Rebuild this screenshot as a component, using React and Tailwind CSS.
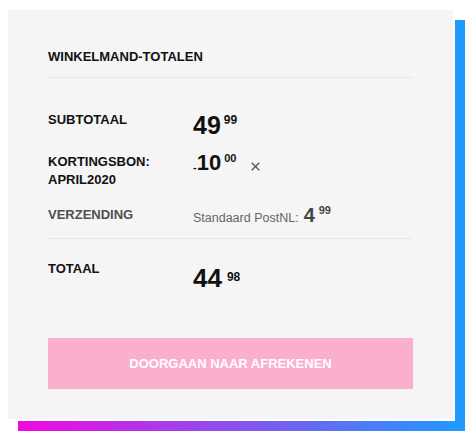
import React from "react";

function Close() {
  return (
    <svg width="9" height="9" viewBox="0 0 9 9" className="ml-[15px] mt-[10px] shrink-0">
      <path d="M0.7 0.7 L8.3 8.3 M8.3 0.7 L0.7 8.3" stroke="#555" strokeWidth="1.3" fill="none" />
    </svg>
  );
}

export default function App() {
  const font = { fontFamily: '"Liberation Sans", Arial, sans-serif' };
  return (
    <div className="bg-white w-[474px] h-[439px] pl-[8px] pt-[10px]" style={font}>
      <div className="relative w-[447px] h-[411px]">
        <div className="absolute left-[10px] top-[10px] w-[447px] h-[411px] bg-[linear-gradient(to_right,#f00ae0,#1e9bff)]" />
        <div className="relative w-[447px] h-[411px] bg-[#f5f5f5] border-r-2 border-b-2 border-white px-[40px] pt-[37px] text-[#111]">
          <div className="pb-[10px] border-b border-[#e7e7e7]">
            <div className="text-[13px] leading-[20px] font-bold">WINKELMAND-TOTALEN</div>
          </div>

          <div className="pb-[13px] border-b border-[#e7e7e7]">
            {/* Subtotaal */}
            <div className="flex items-start mt-[33px]">
              <div className="w-[145px] shrink-0 text-[13px] leading-[18px] font-bold">SUBTOTAAL</div>
              <div className="flex items-start mt-[2px]">
                <span className="text-[25px] leading-none font-bold">49</span>
                <span className="text-[12px] leading-none font-bold ml-[3px] mt-[1px]">99</span>
              </div>
            </div>

            {/* Kortingsbon */}
            <div className="flex items-start mt-[15px]">
              <div className="w-[145px] shrink-0 text-[13px] leading-[18px] font-bold">
                KORTINGSBON:
                <br />
                APRIL2020
              </div>
              <div className="flex items-start mt-[-1px]">
                <span className="text-[11px] leading-none font-bold mt-[10px]">-</span>
                <span className="text-[22px] leading-none font-bold">10</span>
                <span className="text-[11px] leading-none font-bold ml-[3px] mt-[1px]">00</span>
                <Close />
              </div>
            </div>

            {/* Verzending */}
            <div className="flex items-start mt-[17px]">
              <div className="w-[145px] shrink-0 text-[13px] leading-[18px] font-bold text-[#4f4f4f]">VERZENDING</div>
              <div className="flex items-start mt-[-1px] text-[#444]">
                <div className="flex items-baseline">
                  <span className="text-[12.5px] leading-none text-[#666]">Standaard PostNL:</span>
                  <span className="text-[20px] leading-none font-bold ml-[5px]">4</span>
                </div>
                <span className="text-[11px] leading-none font-bold ml-[4px]">99</span>
              </div>
            </div>
          </div>

          {/* Totaal */}
          <div className="flex items-start mt-[21px]">
            <div className="w-[145px] shrink-0 text-[13px] leading-[18px] font-bold">TOTAAL</div>
            <div className="flex items-start mt-[5px]">
              <span className="text-[26px] leading-none font-bold">44</span>
              <span className="text-[12px] leading-none font-bold ml-[5px] mt-[6px]">98</span>
            </div>
          </div>

          <button className="mt-[47px] w-full h-[51px] bg-[#fbafce] text-white text-[13px] font-bold flex items-center justify-center">
            DOORGAAN NAAR AFREKENEN
          </button>
        </div>
      </div>
    </div>
  );
}
